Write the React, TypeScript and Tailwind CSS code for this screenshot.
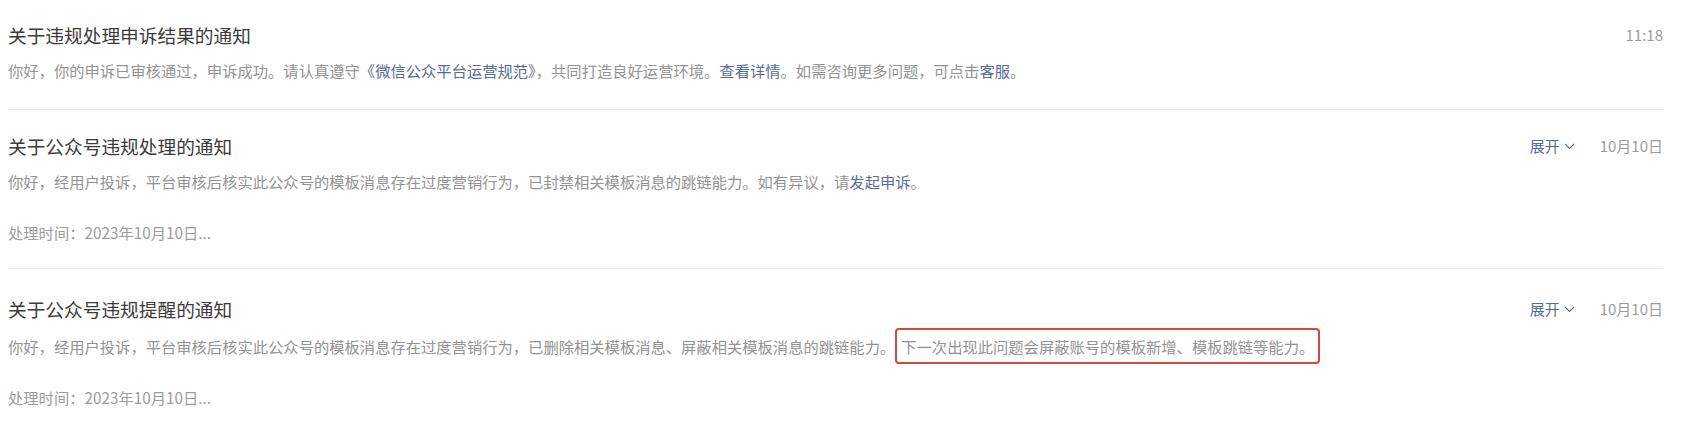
import React from 'react';

type Notice = {
  title: string;
  date: string;
  expandable?: boolean;
  body: React.ReactNode;
  time?: string;
  spacing: string;
  bodyGap: string;
};

const linkCls = 'text-[#576b95]';

const notices: Notice[] = [
  {
    title: '关于违规处理申诉结果的通知',
    date: '11:18',
    spacing: 'pt-[22px] pb-[27px]',
    bodyGap: 'mt-[10px]',
    body: (
      <>
        你好，你的申诉已审核通过，申诉成功。请认真遵守<span className={linkCls}>《微信公众平台运营规范》</span>，共同打造良好运营环境。
        <span className={linkCls}>查看详情</span>。如需咨询更多问题，可点击<span className={linkCls}>客服</span>。
      </>
    ),
  },
  {
    title: '关于公众号违规处理的通知',
    date: '10月10日',
    expandable: true,
    spacing: 'pt-[23px] pb-[24px]',
    bodyGap: 'mt-[10px]',
    body: (
      <>
        你好，经用户投诉，平台审核后核实此公众号的模板消息存在过度营销行为，已封禁相关模板消息的跳链能力。如有异议，请
        <span className={linkCls}>发起申诉</span>。
      </>
    ),
    time: '处理时间：2023年10月10日...',
  },
  {
    title: '关于公众号违规提醒的通知',
    date: '10月10日',
    expandable: true,
    spacing: 'pt-[27px] pb-[24px]',
    bodyGap: 'mt-[12px]',
    body: (
      <>
        你好，经用户投诉，平台审核后核实此公众号的模板消息存在过度营销行为，已删除相关模板消息、屏蔽相关模板消息的跳链能力。
        <span className="border-2 border-[#d4493d] rounded-[4px] px-[4px] py-[5px]">
          下一次出现此问题会屏蔽账号的模板新增、模板跳链等能力。
        </span>
      </>
    ),
    time: '处理时间：2023年10月10日...',
  },
];

function Chevron() {
  return (
    <svg width="11" height="7" viewBox="0 0 11 7" className="ml-[4px] mt-[1px]">
      <polyline points="1,1 5.5,5.5 10,1" fill="none" stroke="#576b95" strokeWidth="1.1" />
    </svg>
  );
}

function NoticeItem({ n, last }: { n: Notice; last: boolean }) {
  return (
    <div className={`${n.spacing} ${last ? '' : 'border-b border-[#ededed]'}`}>
      <div className="flex items-center justify-between">
        <h3 className="text-[18.7px] leading-[26px] text-[#3b3b3b] font-normal">{n.title}</h3>
        <div className="flex items-center text-[15px] leading-[26px]">
          {n.expandable && (
            <span className="flex items-center text-[#576b95] mr-[25px]">
              展开
              <Chevron />
            </span>
          )}
          <span className="text-[#9c9c9c]">{n.date}</span>
        </div>
      </div>
      <p className={`${n.bodyGap} text-[15.3px] leading-[24px] text-[#939393]`}>{n.body}</p>
      {n.time && <p className="mt-[27px] text-[15.3px] leading-[24px] text-[#9c9c9c]">{n.time}</p>}
    </div>
  );
}

export default function App() {
  return (
    <main
      className="min-h-screen bg-white pl-[8px] pr-[40px]"
      style={{ fontFamily: '"Noto Sans CJK SC", "Noto Sans", sans-serif' }}
    >
      {notices.map((n, i) => (
        <NoticeItem key={i} n={n} last={i === notices.length - 1} />
      ))}
    </main>
  );
}
